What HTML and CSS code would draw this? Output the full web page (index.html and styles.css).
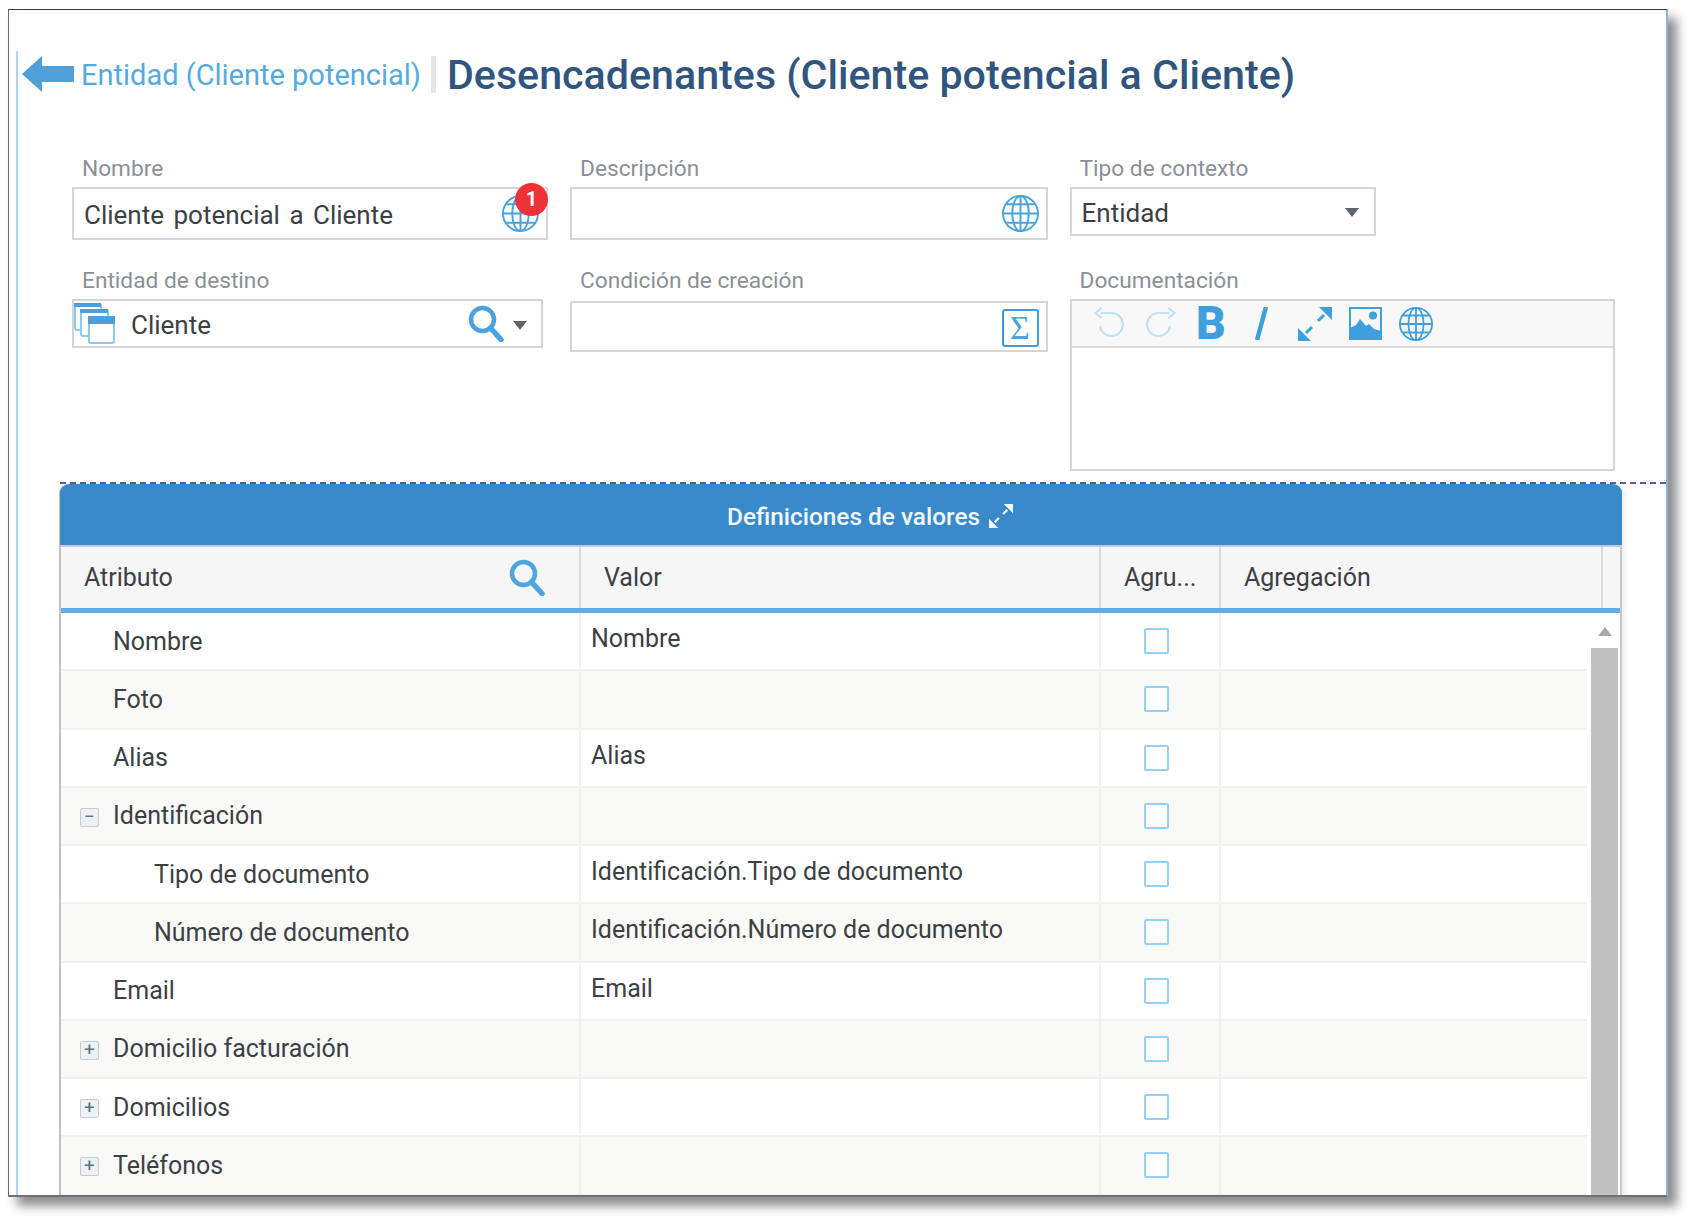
FILE: index.html
```html
<!DOCTYPE html>
<html lang="es">
<head>
  <meta charset="UTF-8">
  <title>Desencadenantes (Cliente potencial a Cliente)</title>
  <link rel="stylesheet" href="styles.css">
</head>
<body>

  <svg class="sprites" width="0" height="0">
    <symbol id="globe" viewBox="0 0 38 38">
      <g fill="none" stroke="currentColor" stroke-width="2">
        <circle cx="19" cy="19" r="18"/>
        <ellipse cx="19" cy="19" rx="8.500" ry="18"/>
        <path d="M19 1v36M1 19h36M4.500 9.500h29M4.500 28.500h29"/>
      </g>
    </symbol>
    <symbol id="search" viewBox="0 0 36 37">
      <circle cx="14.500" cy="14.500" r="11.500" fill="none" stroke="currentColor" stroke-width="4.500"/>
      <path d="M22.500 23l10.500 11.500" fill="none" stroke="currentColor" stroke-width="5.500" stroke-linecap="round"/>
    </symbol>
    <symbol id="expand" viewBox="0 0 34 34">
      <path d="M34 0v13L21 0zM0 34V21l13 13z" fill="currentColor"/>
      <path d="M26 8l-6 6M8 26l6-6" fill="none" stroke="currentColor" stroke-width="3"/>
    </symbol>
  </svg>

  <div class="window">
    <div class="content">

      <header class="page-head">
        <svg class="back-arrow" viewBox="0 0 52 36"><path d="M0 18L20 0v10h32v16H20v10z"/></svg>
        <a class="crumb">Entidad (Cliente potencial)</a>
        <span class="crumb-sep"></span>
        <h1>Desencadenantes (Cliente potencial a Cliente)</h1>
      </header>

      <form class="fields">
        <div class="field">
          <label>Nombre</label>
          <div class="box box-tall">
            <span class="box-text spaced">Cliente potencial a Cliente</span>
            <span class="box-icon globe-wrap">
              <svg class="icon-37"><use href="#globe"/></svg>
              <span class="badge">1</span>
            </span>
          </div>
        </div>
        <div class="field">
          <label>Descripción</label>
          <div class="box box-tall">
            <span class="box-icon"><svg class="icon-37"><use href="#globe"/></svg></span>
          </div>
        </div>
        <div class="field">
          <label>Tipo de contexto</label>
          <div class="box box-select">
            <span class="box-text">Entidad</span>
            <span class="caret caret-select"></span>
          </div>
        </div>

        <div class="field">
          <label>Entidad de destino</label>
          <div class="box box-entity">
            <svg class="entity-icon" viewBox="0 0 41 41">
              <g fill="#fff" stroke="#8cc8f2" stroke-width="2">
                <rect x="1" y="1" width="26" height="26" rx="2"/>
                <rect x="7" y="7" width="27" height="26" rx="2"/>
                <rect x="15" y="14" width="25" height="26" rx="2"/>
              </g>
              <g fill="#4f9fdb">
                <rect x="0" y="0" width="27" height="4"/>
                <rect x="6" y="6" width="28" height="4"/>
                <rect x="14" y="13" width="27" height="8"/>
              </g>
            </svg>
            <span class="box-text entity-name">Cliente</span>
            <svg class="entity-search"><use href="#search"/></svg>
            <span class="caret caret-entity"></span>
          </div>
        </div>
        <div class="field">
          <label>Condición de creación</label>
          <div class="box box-cond">
            <span class="box-icon"><span class="sigma">Σ</span></span>
          </div>
        </div>
        <div class="field">
          <label>Documentación</label>
          <div class="editor">
            <div class="editor-bar">
              <span class="tool tool-off">
                <svg viewBox="0 0 30 33"><path d="M6 6h11a11.500 11.500 0 1 1-11.500 13" fill="none" stroke="currentColor" stroke-width="2"/><path d="M7 1L1 6l6 5" fill="none" stroke="currentColor" stroke-width="2"/></svg>
              </span>
              <span class="tool tool-off">
                <svg viewBox="0 0 30 33"><path d="M24 6H13a11.500 11.500 0 1 0 11.500 13" fill="none" stroke="currentColor" stroke-width="2"/><path d="M23 1l6 5-6 5" fill="none" stroke="currentColor" stroke-width="2"/></svg>
              </span>
              <span class="tool tool-bold">B</span>
              <span class="tool tool-italic">
                <svg viewBox="0 0 14 33"><path d="M11.500 0L2.500 33" fill="none" stroke="currentColor" stroke-width="4.500"/></svg>
              </span>
              <span class="tool"><svg class="tool-expand"><use href="#expand"/></svg></span>
              <span class="tool">
                <svg viewBox="0 0 33 33">
                  <rect x="1" y="1" width="31" height="31" fill="none" stroke="currentColor" stroke-width="2"/>
                  <circle cx="24" cy="8.500" r="4" fill="currentColor"/>
                  <path d="M1 32V21l6-3 4-6 6 7 3-2 5 5 7 2v8z" fill="currentColor"/>
                </svg>
              </span>
              <span class="tool"><svg class="tool-globe"><use href="#globe"/></svg></span>
            </div>
          </div>
        </div>
      </form>

      <section class="values">
        <div class="values-card">
          <div class="values-title">
            <span>Definiciones de valores</span>
            <svg class="title-expand"><use href="#expand"/></svg>
          </div>

          <div class="grid-head">
            <div class="head-cell head-attr">Atributo<svg class="head-search"><use href="#search"/></svg></div>
            <div class="head-cell">Valor</div>
            <div class="head-cell">Agru...</div>
            <div class="head-cell">Agregación</div>
            <div class="head-cell head-end"></div>
          </div>

          <div class="grid-body">
            <div class="rows">
              <div class="row">
                <div class="cell attr">Nombre</div>
                <div class="cell val">Nombre</div>
                <div class="cell chk"><span class="checkbox"></span></div>
                <div class="cell"></div>
              </div>
              <div class="row">
                <div class="cell attr">Foto</div>
                <div class="cell val"></div>
                <div class="cell chk"><span class="checkbox"></span></div>
                <div class="cell"></div>
              </div>
              <div class="row">
                <div class="cell attr">Alias</div>
                <div class="cell val">Alias</div>
                <div class="cell chk"><span class="checkbox"></span></div>
                <div class="cell"></div>
              </div>
              <div class="row">
                <div class="cell attr"><span class="tree-btn">&minus;</span>Identificación</div>
                <div class="cell val"></div>
                <div class="cell chk"><span class="checkbox"></span></div>
                <div class="cell"></div>
              </div>
              <div class="row">
                <div class="cell attr child">Tipo de documento</div>
                <div class="cell val">Identificación.Tipo de documento</div>
                <div class="cell chk"><span class="checkbox"></span></div>
                <div class="cell"></div>
              </div>
              <div class="row">
                <div class="cell attr child">Número de documento</div>
                <div class="cell val">Identificación.Número de documento</div>
                <div class="cell chk"><span class="checkbox"></span></div>
                <div class="cell"></div>
              </div>
              <div class="row">
                <div class="cell attr">Email</div>
                <div class="cell val">Email</div>
                <div class="cell chk"><span class="checkbox"></span></div>
                <div class="cell"></div>
              </div>
              <div class="row">
                <div class="cell attr"><span class="tree-btn">+</span>Domicilio facturación</div>
                <div class="cell val"></div>
                <div class="cell chk"><span class="checkbox"></span></div>
                <div class="cell"></div>
              </div>
              <div class="row">
                <div class="cell attr"><span class="tree-btn">+</span>Domicilios</div>
                <div class="cell val"></div>
                <div class="cell chk"><span class="checkbox"></span></div>
                <div class="cell"></div>
              </div>
              <div class="row">
                <div class="cell attr"><span class="tree-btn">+</span>Teléfonos</div>
                <div class="cell val"></div>
                <div class="cell chk"><span class="checkbox"></span></div>
                <div class="cell"></div>
              </div>
            </div>
            <div class="scrollbar">
              <span class="scroll-up"></span>
              <span class="scroll-thumb"></span>
            </div>
          </div>
        </div>
      </section>

    </div>
  </div>

</body>
</html>
```

FILE: styles.css
```css
/* Global */
* {
  box-sizing: border-box;
}
body {
  margin: 0;
  min-height: 1222px;
  background: #fff;
  font-family: Roboto, sans-serif;
  color: #3b3f45;
}
.sprites {
  position: absolute;
}

/* Window frame */
.window {
  margin: 9px 0 0 8px;
  width: 1660px;
  height: 1188px;
  padding-left: 7px;
  overflow: hidden;
  background: #fff;
  border-top: 1px solid #3e4347;
  border-left: 1px solid #6a6a6a;
  border-right: 2px solid #8db4d6;
  border-bottom: 2px solid #6e7276;
  box-shadow: 9px 9px 10px rgba(0, 0, 0, 0.45);
}
.content {
  height: 100%;
  border-left: 2px solid #acd5f5;
}

/* Page heading */
.page-head {
  display: flex;
  align-items: center;
  height: 46px;
  margin: 41px 0 56px;
  padding-left: 4px;
}
.back-arrow {
  width: 52px;
  height: 36px;
  fill: #4f9fd9;
  flex: none;
}
.crumb {
  margin: 2px 0 0 7px;
  font-size: 29px;
  color: #55aade;
  white-space: nowrap;
}
.crumb-sep {
  width: 5px;
  height: 37px;
  margin: 0 11px 0 10px;
  background: #e2e5e9;
  flex: none;
}
.page-head h1 {
  margin: 2px 0 0;
  font-size: 41.200px;
  font-weight: 500;
  color: #30567f;
  white-space: nowrap;
}

/* Form */
.fields {
  display: grid;
  grid-template-columns: 476px 477.500px 545px;
  grid-template-rows: 88px auto;
  column-gap: 22px;
  row-gap: 24px;
  height: 329px;
  padding-left: 54px;
}
.field label {
  display: block;
  height: 32px;
  margin-bottom: 2px;
  padding-left: 10px;
  font-size: 22.700px;
  line-height: 32px;
  color: #8b9097;
}
.box {
  display: flex;
  align-items: center;
  padding: 0 7px 0 10px;
  background: #fff;
  border: 2px solid #d5d5d5;
  font-size: 26px;
}
.box-tall {
  height: 53px;
}
.box-select {
  width: 306px;
  height: 49px;
}
.box-entity {
  width: 471px;
  height: 49px;
  padding-left: 0;
}
.box-cond {
  height: 51px;
  margin-top: 4px;
}
.box-text {
  padding-top: 2px;
  white-space: nowrap;
  color: #3b4046;
}
.spaced {
  word-spacing: 3px;
}
.box-icon {
  display: flex;
  margin-left: auto;
  color: #4aa3dd;
}
.icon-37 {
  width: 37px;
  height: 37px;
}
.globe-wrap {
  position: relative;
}
.badge {
  position: absolute;
  top: -12px;
  right: -9px;
  width: 33px;
  height: 33px;
  border-radius: 50%;
  background: #ee3338;
  color: #fff;
  font-size: 20px;
  font-weight: 700;
  line-height: 33px;
  text-align: center;
}
.sigma {
  display: block;
  width: 37px;
  height: 38px;
  margin-top: 3px;
  border: 2px solid #3f9ddb;
  border-radius: 3px;
  font-family: "Liberation Serif", serif;
  font-size: 34px;
  line-height: 33px;
  text-align: center;
}
.caret {
  width: 0;
  height: 0;
  border-left: 7.500px solid transparent;
  border-right: 7.500px solid transparent;
  border-top: 9px solid #5f656b;
}
.caret-select {
  margin-left: auto;
  margin-right: 8px;
  margin-top: 2px;
}
.entity-icon {
  width: 41px;
  height: 41px;
  flex: none;
}
.entity-name {
  margin-left: 16px;
}
.entity-search {
  width: 36px;
  height: 37px;
  margin-left: auto;
  color: #4aa3dd;
}
.caret-entity {
  margin: 3px 7px 0 9px;
}

/* Rich text box */
.editor {
  height: 172px;
  border: 2px solid #d5d5d5;
  background: #fff;
}
.editor-bar {
  display: flex;
  align-items: center;
  height: 47px;
  padding: 0 0 0 13px;
  background: #f8f8f8;
  border-bottom: 2px solid #d8d8d8;
  color: #3f9fdc;
}
.tool {
  display: flex;
  align-items: center;
  justify-content: center;
  width: 50.500px;
  height: 33px;
}
.tool svg {
  height: 33px;
  width: 33px;
}
.tool-off {
  color: #bfe1f7;
}
.tool-bold {
  font-size: 46px;
  font-weight: 900;
  line-height: 33px;
}
.tool-italic {
  margin-right: 3px;
}
.tool .tool-expand,
.tool .tool-globe {
  width: 34px;
  height: 34px;
}

/* Values grid */
.values {
  margin-left: 42px;
  border-top: 2px dashed #5b5ba9;
}
.values-card {
  width: 1563px;
  margin-left: -1px;
  height: 800px;
  background: #fff;
  border-left: 2px solid #c2c2c2;
  border-right: 2px solid #c8c8c8;
  border-radius: 9px 9px 0 0;
  box-shadow: 3px 0 6px rgba(0, 0, 0, 0.08);
}
.values-title {
  display: flex;
  align-items: center;
  justify-content: center;
  gap: 9px;
  height: 61px;
  margin: 0 -2px 0 -1px;
  padding: 4px 0 0 58px;
  background: #398aca;
  border-radius: 9px 9px 0 0;
  font-size: 24.400px;
  font-weight: 500;
  color: #f4f8fc;
}
.title-expand {
  width: 24px;
  height: 24px;
  margin-bottom: 2px;
  color: #f4f8fc;
}
.grid-head {
  display: grid;
  grid-template-columns: 520px 520px 120px 382px 1fr;
  height: 68px;
  background: #f6f6f6;
  border-top: 2px solid #bccbdb;
  border-bottom: 5px solid #62aee2;
  font-size: 25px;
  color: #3c3f44;
}
.head-cell {
  display: flex;
  align-items: center;
  padding-left: 23px;
  border-right: 2px solid #dadada;
  white-space: nowrap;
}
.head-end {
  padding-left: 0;
  border-right: none;
}
.head-attr {
  justify-content: space-between;
  padding-right: 34px;
}
.head-search {
  width: 36px;
  height: 37px;
  color: #4fa5de;
}
.grid-body {
  display: flex;
}
.rows {
  width: 1526px;
  flex: none;
}
.row {
  display: grid;
  grid-template-columns: 520px 520px 120px 1fr;
  height: 58.250px;
  border-bottom: 2px solid #f1f1f1;
  background: #fff;
  font-size: 25px;
  color: #3c3f44;
}
.row:nth-child(even) {
  background: #f9f9f8;
}
.cell {
  display: flex;
  align-items: center;
  border-right: 2px solid #f1f1f1;
  white-space: nowrap;
}
.cell:last-child {
  border-right: none;
}
.attr {
  padding-left: 52px;
  position: relative;
}
.child {
  padding-left: 93px;
}
.val {
  padding: 0 0 5px 10px;
}
.chk {
  justify-content: center;
  padding-right: 8px;
}
.checkbox {
  width: 25px;
  height: 26px;
  background: #fff;
  border: 2px solid #94d0f7;
  border-radius: 2px;
}
.tree-btn {
  position: absolute;
  left: 19px;
  top: 20px;
  width: 19px;
  height: 19px;
  background: #eef1f3;
  border: 1px solid #c3ccd2;
  border-radius: 2px;
  color: #5a7383;
  font-size: 19px;
  font-weight: 400;
  line-height: 16px;
  text-align: center;
}

/* Scrollbar */
.scrollbar {
  display: flex;
  flex-direction: column;
  align-items: center;
  width: 27px;
  margin-left: 4px;
  flex: none;
}
.scroll-up {
  margin-top: 14px;
  width: 0;
  height: 0;
  border-left: 7.500px solid transparent;
  border-right: 7.500px solid transparent;
  border-bottom: 9px solid #a9a9a9;
}
.scroll-thumb {
  width: 27px;
  height: 700px;
  margin-top: 12px;
  background: #c0c0c0;
}
```
